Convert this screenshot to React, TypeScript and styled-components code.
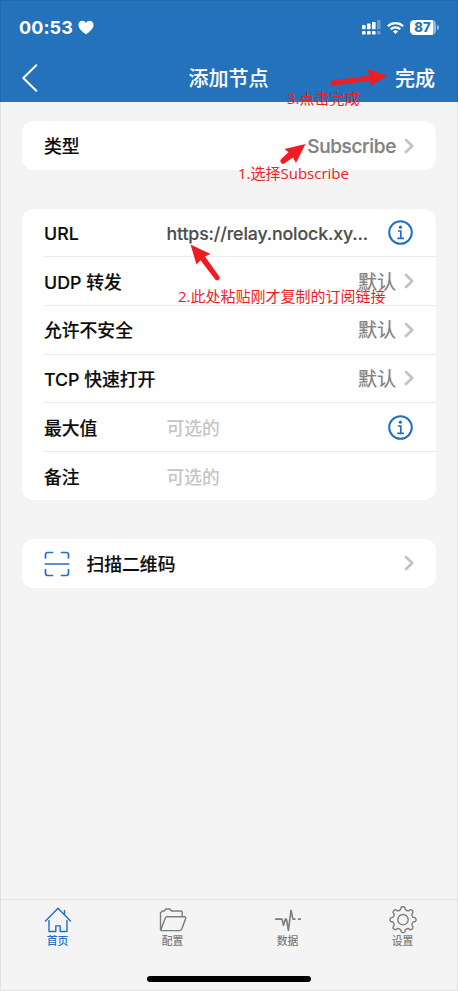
import React from "react";
import styled, { createGlobalStyle } from "styled-components";

const BLUE = "#2472bc";
const ACCENT = "#1f6fc4";
const RED = "#ee1d23";

const GlobalStyle = createGlobalStyle`
  * { box-sizing: border-box; }
  body { margin: 0; background: #f4f4f4; }
`;

const Screen = styled.div`
  position: relative;
  width: 458px;
  height: 991px;
  display: flex;
  flex-direction: column;
  overflow: hidden;
  background: #f4f4f4;
  font-family: Inter, "Noto Sans CJK SC", sans-serif;
  color: #0c0c0c;
  &::after {
    content: "";
    position: absolute;
    inset: 0;
    border: 1px solid rgba(0, 0, 0, 0.07);
    pointer-events: none;
  }
`;

const Header = styled.header`
  height: 102px;
  flex: none;
  background: ${BLUE};
  color: #fff;
  display: flex;
  flex-direction: column;
`;

const StatusBar = styled.div`
  height: 54px;
  display: flex;
  justify-content: space-between;
  align-items: center;
  padding: 1px 19.5px 0 19px;
`;

const Clock = styled.div`
  display: flex;
  align-items: center;
  gap: 5px;
  font-size: 18px;
  font-weight: 700;
  letter-spacing: 0.1px;
`;

const Indicators = styled.div`
  display: flex;
  align-items: center;
  gap: 6px;
`;

const Battery = styled.div`
  display: flex;
  align-items: center;
  gap: 1px;
`;

const BatteryBody = styled.div`
  width: 26px;
  height: 15px;
  padding-right: 1px;
  border-radius: 4.5px;
  background: linear-gradient(90deg, #fff 23px, rgba(255, 255, 255, 0.5) 23px);
  color: ${BLUE};
  font-size: 13px;
  line-height: 15px;
  font-weight: 800;
  text-align: center;
`;

const BatteryTip = styled.div`
  width: 1.6px;
  height: 5px;
  border-radius: 0 2px 2px 0;
  background: rgba(255, 255, 255, 0.5);
`;

const NavBar = styled.div`
  height: 48px;
  display: grid;
  grid-template-columns: 1fr auto 1fr;
  align-items: center;
  padding: 0 23px 0 22px;
  font-size: 20px;
  font-weight: 500;
  line-height: 28px;
`;

const Back = styled.div`
  display: flex;
`;

const Title = styled.div`
  padding-top: 1px;
  -webkit-text-stroke: 0.1px currentColor;
`;

const Done = styled(Title)`
  text-align: right;
`;

const Content = styled.main`
  flex: 1;
  padding: 19.3px 22px 0;
  display: flex;
  flex-direction: column;
  gap: 38.6px;
`;

const Card = styled.section`
  background: #fff;
  border-radius: 12px;
  padding-left: 22px;
`;

const Row = styled.div`
  height: 48.66px;
  display: flex;
  align-items: center;
  padding-right: 22px;
  font-size: 17.8px;
  line-height: 26px;
  &:not(:last-child) { border-bottom: 1px solid #ebebeb; }
`;

const Label = styled.div<{ $wide?: boolean }>`
  width: ${(p) => (p.$wide ? "auto" : "122.5px")};
  flex: none;
  padding-top: 3px;
  font-weight: 500;
  white-space: nowrap;
  -webkit-text-stroke: 0.15px currentColor;
`;

const Url = styled.div`
  padding-top: 3px;
  color: #4d4d4d;
  font-weight: 500;
  letter-spacing: -0.15px;
  white-space: nowrap;
  -webkit-text-stroke: 0.15px currentColor;
`;

const Placeholder = styled.div`
  padding-top: 3px;
  color: #c5c5c5;
  font-weight: 500;
`;

const Trailing = styled.div`
  margin-left: auto;
  display: flex;
  align-items: center;
  gap: 8px;
  color: #818181;
  font-size: 19px;
`;

const Choice = styled.span<{ $latin?: boolean }>`
  padding-top: ${(p) => (p.$latin ? "2px" : "3px")};
  font-weight: ${(p) => (p.$latin ? 500 : 400)};
  letter-spacing: ${(p) => (p.$latin ? "-0.35px" : "0")};
  -webkit-text-stroke: 0.2px currentColor;
`;

const ScanIconBox = styled.div`
  display: flex;
  padding-top: 1.5px;
  margin-right: 16.5px;
`;

const TabBar = styled.nav`
  height: 92px;
  flex: none;
  border-top: 1px solid #e4e4e4;
  display: grid;
  grid-template-columns: repeat(4, 115px);
  grid-template-rows: 76px auto;
  justify-items: center;
`;

const Tab = styled.div<{ $active?: boolean }>`
  display: flex;
  flex-direction: column;
  align-items: center;
  gap: 1px;
  padding-top: 6px;
  color: ${(p) => (p.$active ? ACCENT : "#7c7c7c")};
  font-size: 10.8px;
  line-height: 14px;
  font-weight: 500;
  svg { display: block; }
`;

const HomeIndicator = styled.div`
  grid-column: 1 / -1;
  width: 164px;
  height: 6px;
  border-radius: 3px;
  background: #000;
  margin-left: -2px;
`;

const Note = styled.div<{ $x: number; $y: number }>`
  position: absolute;
  left: ${(p) => p.$x}px;
  top: ${(p) => p.$y}px;
  color: ${RED};
  font-family: "Open Sans", "Noto Sans CJK SC", sans-serif;
  font-size: 15px;
  line-height: 20px;
  white-space: nowrap;
`;

const Arrows = styled.svg`
  position: absolute;
  left: 0;
  top: 0;
  pointer-events: none;
`;

const Heart = () => (
  <svg width="16" height="15" viewBox="0 0 16 15" fill="#fff">
    <path d="M8 14.3C4.6 11.8.5 8.8.5 4.9.5 2.4 2.2.7 4.3.7 5.9.7 7.2 1.5 8 2.9 8.8 1.5 10.1.7 11.7.7c2.1 0 3.8 1.7 3.8 4.2 0 3.9-4.1 6.9-7.5 9.4z" />
  </svg>
);

const Signal = () => (
  <svg width="19" height="15" viewBox="0 0 19 15" fill="#fff">
    <rect x="0" y="5" width="3.6" height="4.3" rx=".8" />
    <rect x="5" y="3.5" width="3.6" height="5.8" rx=".8" />
    <rect x="10" y="2" width="3.6" height="7.3" rx=".8" />
    <rect x="15" y="0" width="3.6" height="9.3" rx=".8" opacity=".3" />
    <rect x="0" y="11" width="3.6" height="3.6" rx=".9" />
    <rect x="5" y="11" width="3.6" height="3.6" rx=".9" />
    <rect x="10" y="11" width="3.6" height="3.6" rx=".9" />
    <rect x="15" y="11" width="3.6" height="3.6" rx=".9" opacity=".3" />
  </svg>
);

const Wifi = () => (
  <svg width="17" height="14" viewBox="0 0 18 14" fill="none" stroke="#fff" strokeWidth="2.4">
    <path d="M.9 5.1a11.6 11.6 0 0 1 16.2 0" />
    <path d="M3.9 8.3a7.3 7.3 0 0 1 10.2 0" />
    <path d="M9 13.4l-2.7-2.8a3.9 3.9 0 0 1 5.4 0z" fill="#fff" stroke="none" />
  </svg>
);

const BackIcon = () => (
  <svg width="16" height="28" viewBox="0 0 16 28" fill="none" stroke="#fff" strokeWidth="2" strokeLinecap="round" strokeLinejoin="round">
    <path d="M14.3 1.3L1.3 14l13 12.7" />
  </svg>
);

const Chevron = () => (
  <svg width="10" height="16" viewBox="0 0 10 16" fill="none" stroke="#c2c2c2" strokeWidth="2.7" strokeLinecap="round" strokeLinejoin="round">
    <path d="M2 2l6.2 6L2 14" />
  </svg>
);

const Info = () => (
  <svg width="25" height="25" viewBox="0 0 25 25" fill="none" stroke={ACCENT} strokeWidth="2">
    <circle cx="12.5" cy="12.5" r="11.3" />
    <circle cx="12.4" cy="7.2" r="1.6" fill={ACCENT} stroke="none" />
    <path d="M9.8 11h3v7.3M9.3 18.3h6.7" strokeWidth="1.7" />
  </svg>
);

const InfoBox = styled.div`
  display: flex;
  margin-right: 1px;
`;

const Scan = () => (
  <svg width="26" height="26" viewBox="0 0 26 26" fill="none" stroke={ACCENT} strokeWidth="1.7" strokeLinecap="round">
    <path d="M1.5 7V3.7q0-2.2 2.2-2.2H8.5M17.5 1.5h4.8q2.2 0 2.2 2.2V7M24.5 18.5v3.8q0 2.2-2.2 2.2h-4.8M8.5 24.5H3.7q-2.2 0-2.2-2.2V18.5M1.3 13h23.4" />
  </svg>
);

const tabStroke = {
  width: 28,
  height: 28,
  viewBox: "0 0 28 28",
  fill: "none",
  stroke: "currentColor",
  strokeWidth: 1.4,
  strokeLinecap: "round" as const,
  strokeLinejoin: "round" as const,
};

const HomeIcon = () => (
  <svg {...tabStroke}>
    <path d="M1.5 15L14 2.2 26.5 15M5 14.500v11h6.800v-5.600h4.400v5.600H23v-11M20.500 8.300V4.500" />
  </svg>
);

const FolderIcon = () => (
  <svg {...tabStroke}>
    <path d="M1.5 24V6.800L3.300 5h1.900l1.600-2h4l1.700 2h9.400q1.300 0 1.300 1.300v4.500M1.700 24.200L6.300 12q.4-1.200 1.700-1.200h17.500q1.700 0 1.200 1.500l-4 11q-.5 1.300-1.900 1.300H3q-1.500 0-1.500-1.500" />
  </svg>
);

const DataIcon = () => (
  <svg {...tabStroke} strokeWidth="1.6">
    <path d="M1.5 13.100H8l1.500 6.200 1.800-6.200 1.200.2 1.900 11 2.600-20 2 8.800H21M24.400 13.100h2" />
  </svg>
);

const GEAR_PATH = (() => {
  const teeth = 8;
  const points: string[] = [];
  const at = (r: number, deg: number) => {
    const a = (deg * Math.PI) / 180;
    return `${(14 + r * Math.sin(a)).toFixed(2)} ${(13.7 - r * Math.cos(a)).toFixed(2)}`;
  };
  for (let i = 0; i < teeth; i++) {
    const c = (i * 360) / teeth;
    points.push(`${i ? "L" : "M"}${at(10.4, c - 13)}`);
    points.push(`Q${at(12.9, c - 10)} ${at(13, c - 4)}`);
    points.push(`L${at(13, c + 4)}`);
    points.push(`Q${at(12.9, c + 10)} ${at(10.4, c + 13)}`);
    points.push(`Q${at(9.4, c + 22.5)} ${at(10.4, c + 32)}`);
  }
  return points.join("") + "Z";
})();

const GearIcon = () => (
  <svg {...tabStroke}>
    <path d={GEAR_PATH} />
    <circle cx="14" cy="13.7" r="5.2" />
  </svg>
);

const ChoiceRow = ({ label }: { label: string }) => (
  <Row>
    <Label>{label}</Label>
    <Trailing>
      <Choice>默认</Choice>
      <Chevron />
    </Trailing>
  </Row>
);

export default function App() {
  return (
    <>
      <GlobalStyle />
      <Screen>
        <Header>
          <StatusBar>
            <Clock>
              <span>00:53</span>
              <Heart />
            </Clock>
            <Indicators>
              <Signal />
              <Wifi />
              <Battery>
                <BatteryBody>87</BatteryBody>
                <BatteryTip />
              </Battery>
            </Indicators>
          </StatusBar>
          <NavBar>
            <Back><BackIcon /></Back>
            <Title>添加节点</Title>
            <Done>完成</Done>
          </NavBar>
        </Header>
        <Content>
          <Card>
            <Row>
              <Label>类型</Label>
              <Trailing>
                <Choice $latin>Subscribe</Choice>
                <Chevron />
              </Trailing>
            </Row>
          </Card>
          <Card>
            <Row>
              <Label>URL</Label>
              <Url>https://relay.nolock.xy...</Url>
              <Trailing><InfoBox><Info /></InfoBox></Trailing>
            </Row>
            <ChoiceRow label="UDP 转发" />
            <ChoiceRow label="允许不安全" />
            <ChoiceRow label="TCP 快速打开" />
            <Row>
              <Label>最大值</Label>
              <Placeholder>可选的</Placeholder>
              <Trailing><InfoBox><Info /></InfoBox></Trailing>
            </Row>
            <Row>
              <Label>备注</Label>
              <Placeholder>可选的</Placeholder>
            </Row>
          </Card>
          <Card>
            <Row>
              <ScanIconBox><Scan /></ScanIconBox>
              <Label $wide>扫描二维码</Label>
              <Trailing><Chevron /></Trailing>
            </Row>
          </Card>
        </Content>
        <TabBar>
          <Tab $active><HomeIcon />首页</Tab>
          <Tab><FolderIcon />配置</Tab>
          <Tab><DataIcon />数据</Tab>
          <Tab><GearIcon />设置</Tab>
          <HomeIndicator />
        </TabBar>
        <Note $x={287} $y={88}>3.点击完成</Note>
        <Note $x={238} $y={163}>1.选择Subscribe</Note>
        <Note $x={178} $y={286}>2.此处粘贴刚才复制的订阅链接</Note>
        <Arrows width="458" height="300" viewBox="0 0 458 300" fill={RED}>
          <path d="M332.5 80.6L370 75.5 367 69 387.500 75.500 369.500 86.500 371 80.500 333.500 85.600A2.500 2.500 0 0 1 332.500 80.600z" />
          <path d="M281.5 158.8L288.500 152.300 284.500 149 305.500 144 296 163 293 157.500 285 163.100A2.600 2.600 0 0 1 281.500 158.800z" />
          <path d="M190.5 244.5L210.500 254 205 256.500 219.300 276.500A2.500 2.500 0 0 1 215.500 279.700L200.500 260.300 196.500 264.500z" />
        </Arrows>
      </Screen>
    </>
  );
}
